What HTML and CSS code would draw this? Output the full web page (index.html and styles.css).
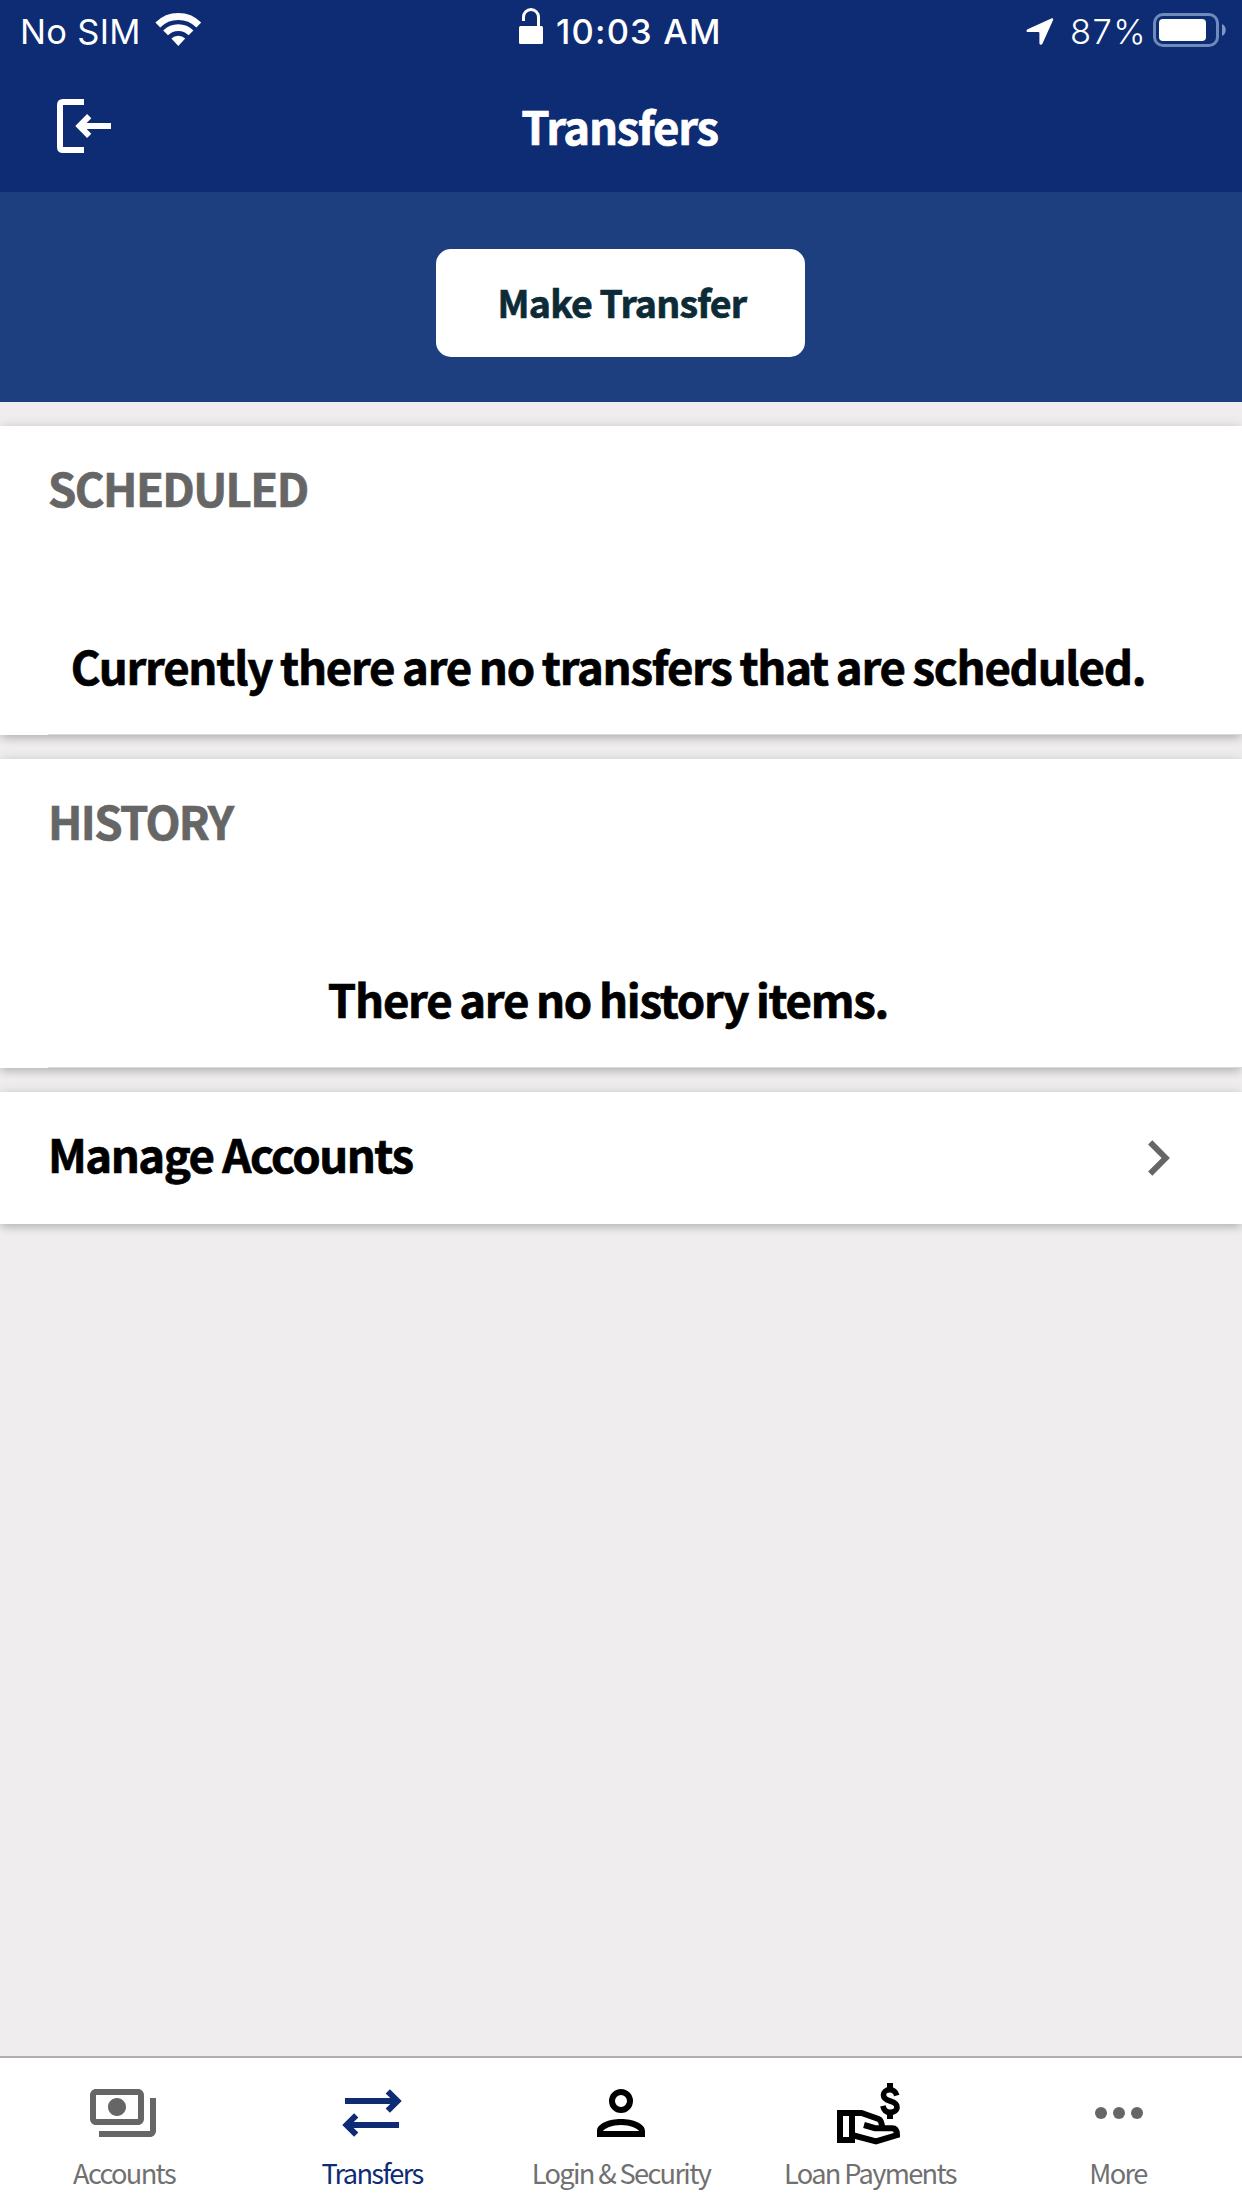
FILE: index.html
```html
<!DOCTYPE html>
<html lang="en">
<head>
<meta charset="utf-8">
<title>Transfers</title>
<link rel="stylesheet" href="styles.css">
</head>
<body>
<div class="app">
  <header class="header">
    <div class="status">
      <div class="status-side">
        <span class="carrier">No SIM</span>
        <svg class="wifi" width="47" height="36" viewBox="0 0 47 36" fill="none" stroke="#fff" stroke-width="6.8"><path d="M2.8 13A29 29 0 0 1 43.8 13M10.6 20.8A18 18 0 0 1 36 20.8"/><path d="M23.3 34 16.4 26.6A9.8 9.8 0 0 1 30.2 26.6z" fill="#fff" stroke="none"/></svg>
      </div>
      <div class="status-mid">
        <svg class="lock" width="24" height="37" viewBox="0 0 24 37"><rect y="19" width="24" height="18" rx="1.5" fill="#fff"/><path d="M4.5 14V10a7.5 7.5 0 0 1 15 0v10" fill="none" stroke="#fff" stroke-width="3"/></svg>
        <span class="time">10:03 AM</span>
      </div>
      <div class="status-side status-right">
        <svg class="location" width="28" height="27" viewBox="0 0 28 27" fill="#fff"><path d="M25.3.4 1.6 11.2C-.2 12 .3 14 2 14h10.3q1.1 0 1.1 1.1V25c0 2 2.2 2.4 3 .7L27 2.2C27.6.8 26.6-.1 25.3.4z"/></svg>
        <span class="percent">87%</span>
        <svg class="battery" width="74" height="34" viewBox="0 0 74 34"><rect x="1.5" y="1.5" width="63" height="31" rx="8.5" fill="none" stroke="#6f8bbc" stroke-width="3"/><rect x="6" y="6" width="47" height="22" rx="4" fill="#fff"/><path d="M69 11c5 2 5 10 0 12z" fill="#7e97c2"/></svg>
      </div>
    </div>
    <div class="nav">
      <svg class="logout" width="54" height="54" viewBox="0 0 54 54" fill="none" stroke="#fff" stroke-width="6"><path d="M27 3H6Q3 3 3 6v42q0 3 3 3h21M54 27H24M32.2 17.2 22.5 27l9.7 9.8"/></svg>
      <h1 class="title">Transfers</h1>
    </div>
  </header>
  <section class="action"><button class="make">Make Transfer</button></section>
  <main class="content">
    <section class="card">
      <h2 class="heading">SCHEDULED</h2>
      <p class="message">Currently there are no transfers that are scheduled.</p>
      <div class="rule"></div>
    </section>
    <section class="card">
      <h2 class="heading">HISTORY</h2>
      <p class="message">There are no history items.</p>
      <div class="rule"></div>
    </section>
    <section class="card manage">
      <span class="manage-label">Manage Accounts</span>
      <svg class="chevron" width="24" height="38" viewBox="0 0 24 38" fill="none" stroke="#666" stroke-width="6"><path d="M3.2 3.3 18.7 19 3.2 34.7"/></svg>
    </section>
  </main>
  <nav class="tabs">
    <a class="tab">
      <svg class="icon" viewBox="0 0 24 24" fill="#666"><path d="M19 14V6c0-1.100-.9-2-2-2H3c-1.100 0-2 .9-2 2v8c0 1.100.9 2 2 2h14c1.100 0 2-.9 2-2zm-2 0H3V6h14v8zm-7-7c-1.660 0-3 1.340-3 3s1.340 3 3 3 3-1.340 3-3-1.340-3-3-3zm13 0v11c0 1.100-.9 2-2 2H4v-2h17V7h2z"/></svg>
      <span class="label label-first">Accounts</span>
    </a>
    <a class="tab active">
      <svg class="icon" viewBox="0 0 72 72" fill="none" stroke="#0e2c74" stroke-width="6"><path d="M9 24h52M51.8 14.3l9.7 9.7-9.7 9.7M63 48H11M20.200 38.300 10.500 48l9.700 9.700"/></svg>
      <span class="label">Transfers</span>
    </a>
    <a class="tab">
      <svg class="icon" viewBox="0 0 72 72"><circle cx="36" cy="24" r="9" fill="none" stroke="#000" stroke-width="6"/><path fill-rule="evenodd" d="M36 42C24 42 12 46.5 12 54v6h48v-6c0-7.5-12-12-24-12zM18 54c1.5-2.5 9-6 18-6s16.5 3.5 18 6z"/></svg>
      <span class="label">Login &amp; Security</span>
    </a>
    <a class="tab">
      <svg class="icon" viewBox="0 0 72 72" fill="none" stroke="#000" stroke-width="6"><path d="M6 36h12v27H6zM18 36h9.5L44.5 42q3.5 1.5 3.5 9M30 48l11 3.2h17Q63 51.2 63 58L42 64.4 18 58"/><path stroke-width="5.6" d="M62.8 18.5Q61 12.8 56 12.8C51.5 12.8 49.5 15.5 49.5 18c0 3.5 2.5 4.8 6.5 6 4.5 1.3 7 2.7 7 6 0 3.5-3 5.3-7 5.3s-6.2-2.3-7.1-6.5"/><path d="M56 6v6M56 36v6"/></svg>
      <span class="label">Loan Payments</span>
    </a>
    <a class="tab">
      <svg class="icon" viewBox="0 0 72 72" fill="#666"><circle cx="18" cy="36" r="6"/><circle cx="36" cy="36" r="6"/><circle cx="54" cy="36" r="6"/></svg>
      <span class="label label-last">More</span>
    </a>
  </nav>
</div>
</body>
</html>
```

FILE: styles.css
```css
* { box-sizing: border-box; }
body { margin: 0; font-family: "Noto Sans CJK JP", sans-serif; font-kerning: normal; }
h1, h2, p { margin: 0; }
svg { display: block; flex: none; }

.app { display: flex; flex-direction: column; width: 1242px; height: 2208px; background: #efedee; overflow: hidden; }

.header { height: 192px; background: #0e2c74; color: #fff; }
.status { display: grid; grid-template-columns: 1fr auto 1fr; height: 60px; padding: 0 15px 0 20px; font: 400 34.5px/63px Inter, sans-serif; }
.status-side, .status-mid { display: flex; align-items: flex-start; white-space: nowrap; }
.status-right { justify-content: flex-end; }
.carrier { width: 135px; letter-spacing: 0.3px; }
.wifi { margin-top: 12px; }
.lock { margin: 7px 13px 0 0; }
.time { width: 172px; font-weight: 500; letter-spacing: 1.2px; }
.location { margin: 18px 16px 0 0; }
.percent { width: 83px; font-weight: 350; letter-spacing: 1.4px; }
.battery { margin-top: 13px; }

.nav { display: grid; grid-template-columns: 200px 1fr 200px; align-items: center; height: 132px; }
.logout { margin-left: 57px; }
.title { padding: 0 3px 3px 0; font-size: 45.5px; line-height: 60px; font-weight: 700; text-align: center; letter-spacing: -1.3px; }

.action { display: flex; justify-content: center; height: 210px; padding: 57px 1px 0 0; background: #1e3f7f; }
.make { width: 369px; height: 108px; padding: 0 0 2px 3px; border: 0; border-radius: 15px; background: #fff; color: #0d2b36; font: 700 37.5px/60px "Noto Sans CJK JP", sans-serif; letter-spacing: -0.8px; }

/* Thickens the bold face slightly */
.title, .make, .heading, .message, .manage-label { -webkit-text-stroke: 0.7px currentColor; }

.content { display: flex; flex: 1; flex-direction: column; gap: 24px; padding-top: 24px; }
.card { background: #fff; box-shadow: 0 4px 9px -1px rgba(0, 0, 0, .2), 0 0 12px rgba(0, 0, 0, .1); }
.heading { height: 122px; padding-left: 48px; color: #666; font-size: 45.5px; line-height: 122px; font-weight: 700; letter-spacing: -1.6px; }
.message { height: 186px; padding: 48px 26px 0 0; font-size: 45.5px; line-height: 138px; font-weight: 700; text-align: center; white-space: nowrap; letter-spacing: -1.25px; word-spacing: -1.2px; }
.rule { height: 1px; margin-left: 48px; background: #d9d9d9; }
.manage { display: flex; align-items: center; justify-content: space-between; height: 132px; padding: 0 71px 0 48px; }
.manage-label { padding-bottom: 10px; font-size: 45.5px; line-height: 60px; font-weight: 700; letter-spacing: -1.5px; }

.tabs { display: grid; grid-template-columns: 246px 252px 246px 252px 246px; height: 152px; padding-top: 19px; border-top: 2px solid #afafaf; background: #fff; color: #707070; }
.tab { display: flex; flex-direction: column; align-items: center; }
.icon { width: 72px; height: 72px; }
.label { margin-top: 5px; font-size: 27.2px; line-height: 36px; font-weight: 400; white-space: nowrap; letter-spacing: -1.65px; }
.label-first { padding-left: 2px; }
.label-last { padding-right: 2px; }
.active { color: #0e2c74; }
```
